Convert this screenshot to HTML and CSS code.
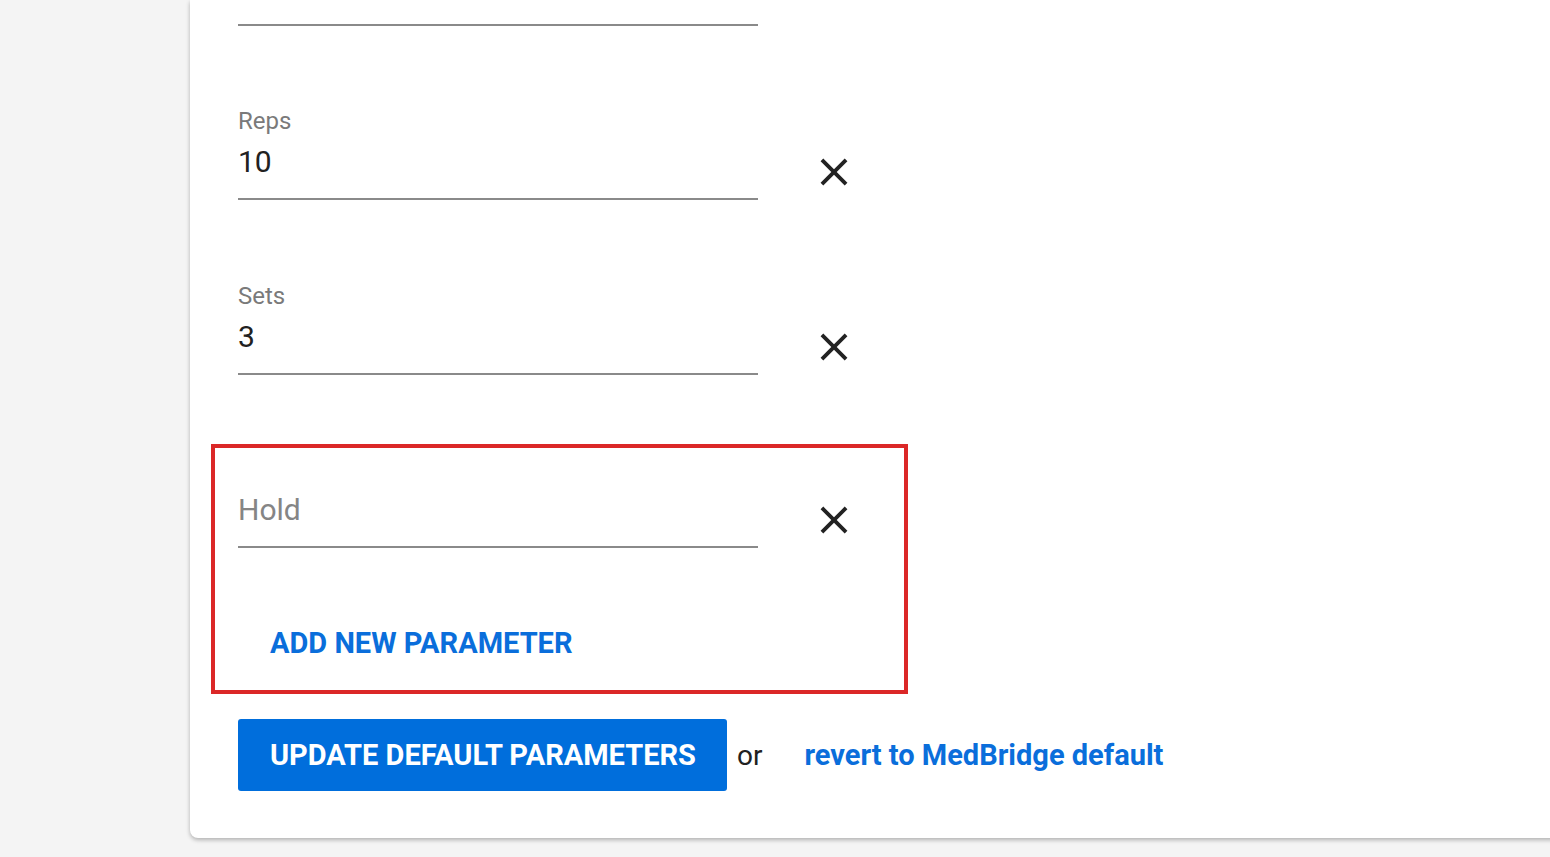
FILE: index.html
```html
<!DOCTYPE html>
<html lang="en">
<head>
<meta charset="utf-8">
<title>Default Parameters</title>
<link rel="stylesheet" href="styles.css">
</head>
<body>
<div class="page">
  <div class="card">
    <div class="top-line"></div>

    <div class="param-row">
      <div class="field">
        <div class="field-label">Reps</div>
        <div class="field-value">10</div>
      </div>
      <button class="remove" aria-label="Remove Reps">
        <svg viewBox="0 0 24 24" width="46" height="46"><path d="M19 6.41L17.59 5 12 10.59 6.41 5 5 6.41 10.59 12 5 17.59 6.41 19 12 13.41 17.59 19 19 17.59 13.41 12z"/></svg>
      </button>
    </div>

    <div class="param-row before-highlight">
      <div class="field">
        <div class="field-label">Sets</div>
        <div class="field-value">3</div>
      </div>
      <button class="remove" aria-label="Remove Sets">
        <svg viewBox="0 0 24 24" width="46" height="46"><path d="M19 6.41L17.59 5 12 10.59 6.41 5 5 6.41 10.59 12 5 17.59 6.41 19 12 13.41 17.59 19 19 17.59 13.41 12z"/></svg>
      </button>
    </div>

    <div class="highlight">
      <div class="param-row first">
        <div class="field">
          <div class="field-label empty">&nbsp;</div>
          <div class="field-value placeholder">Hold</div>
        </div>
        <button class="remove" aria-label="Remove Hold">
          <svg viewBox="0 0 24 24" width="46" height="46"><path d="M19 6.41L17.59 5 12 10.59 6.41 5 5 6.41 10.59 12 5 17.59 6.41 19 12 13.41 17.59 19 19 17.59 13.41 12z"/></svg>
        </button>
      </div>
      <div class="add-row">
        <a class="add-link" href="#">ADD NEW PARAMETER</a>
      </div>
    </div>

    <div class="actions">
      <button class="primary">UPDATE DEFAULT PARAMETERS</button>
      <span class="or">or</span>
      <a class="revert" href="#">revert to MedBridge default</a>
    </div>
  </div>
</div>
</body>
</html>
```

FILE: styles.css
```css
html, body {
  margin: 0;
  padding: 0;
}
body {
  background: #f4f4f4;
  font-family: Roboto, "Liberation Sans", Arial, sans-serif;
  color: #212121;
}
.page {
  width: 1550px;
  height: 857px;
  overflow: hidden;
}
.card {
  margin-left: 190px;
  margin-right: -30px;
  background: #ffffff;
  border-radius: 0 0 0 8px;
  box-shadow: 0 2px 4px rgba(0, 0, 0, 0.28);
  padding: 24px 0 47px 48px;
}
.top-line {
  width: 520px;
  border-bottom: 2px solid #8a8a8a;
  margin-bottom: 82px;
}
.param-row {
  display: flex;
  align-items: flex-end;
  margin-bottom: 83px;
}
.param-row.before-highlight {
  margin-bottom: 69px;
}
.param-row.first {
  margin-bottom: 0;
}
.field {
  width: 520px;
  border-bottom: 2px solid #8a8a8a;
}
.field-label {
  font-size: 24px;
  line-height: 26px;
  color: #7a7a7a;
}
.field-value {
  font-size: 30px;
  line-height: 38px;
  padding: 9px 0 17px;
  color: #212121;
}
.field-value.placeholder {
  color: #858585;
}
.remove {
  margin: 0 0 5px 53px;
  padding: 0;
  border: 0;
  background: none;
  width: 46px;
  height: 46px;
  display: flex;
}
.remove svg {
  fill: #222222;
}
.highlight {
  margin-left: -27px;
  width: 666px;
  border: 4px solid #db2727;
  padding: 8px 0 0 23px;
}
.add-row {
  padding: 80px 0 32px 32px;
}
.add-link {
  font-size: 29px;
  line-height: 30px;
  font-weight: 700;
  color: #0a6edb;
  text-decoration: none;
  display: inline-block;
}
.actions {
  display: flex;
  align-items: center;
  margin-top: 25px;
}
.primary {
  height: 72px;
  width: 489px;
  border: 0;
  border-radius: 3px;
  background: #006edc;
  color: #ffffff;
  font-family: Roboto, "Liberation Sans", Arial, sans-serif;
  font-size: 29px;
  font-weight: 700;
  text-align: left;
  padding: 0 0 0 32px;
}
.or {
  font-size: 28px;
  margin-left: 10px;
  color: #212121;
}
.revert {
  margin-left: 42px;
  font-size: 29px;
  font-weight: 700;
  color: #0a6edb;
  text-decoration: none;
}
```
